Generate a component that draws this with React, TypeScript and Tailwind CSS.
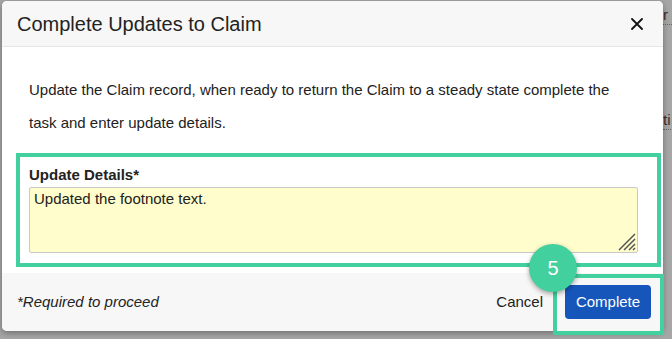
import React from 'react';

const App = () => {
  return (
    <div className="relative w-[672px] h-[339px] overflow-hidden bg-[#a6a6a6] font-['Liberation_Sans',Arial,sans-serif]">
      {/* page behind the overlay */}
      <div className="absolute left-[663px] top-[6px] text-[15px] text-[#333] border-b border-dotted border-[#666] leading-[18px] pr-[4px]">r</div>
      <div className="absolute left-[663px] top-[111px] text-[15px] text-[#333] border-b border-dotted border-[#666] leading-[18px] pr-[4px]">ti</div>

      {/* modal */}
      <div className="absolute left-[2px] top-[1px] w-[661px] h-[330px] flex flex-col rounded-[5px] bg-white overflow-hidden shadow-[0_2px_6px_rgba(0,0,0,0.35)]">
        <div className="h-[46px] shrink-0 flex items-center justify-between pl-[15px] pr-[18px] bg-[#f7f7f7] border-b border-[#e6e6e6]">
          <h1 className="text-[20px] text-[#222]">Complete Updates to Claim</h1>
          <button className="w-[16px] h-[16px] flex items-center justify-center text-[#111]">
            <svg width="12" height="12" viewBox="0 0 12 12" fill="none" stroke="currentColor" strokeWidth="1.8" strokeLinecap="round">
              <path d="M1 1l10 10M11 1L1 11" />
            </svg>
          </button>
        </div>

        <div className="flex-1 pl-[14px] pr-[2px] pt-[26px]">
          <p className="pl-[13px] pr-[30px] text-[15px] leading-[33px] text-[#222]">
            Update the Claim record, when ready to return the Claim to a steady state complete the task and enter update details.
          </p>
          <div className="mt-[14px] border-4 border-[#41d09e] pt-[8px] pl-[9px] pr-[19px] pb-[10px]">
            <label className="block text-[15px] font-bold text-[#222] leading-[20px] mb-[2px]">Update Details*</label>
            <div className="relative">
              <textarea
                defaultValue="Updated the footnote text."
                className="block w-full h-[66px] px-[4px] py-[1px] text-[15px] leading-[20px] text-[#222] bg-[#fefdcb] border border-[#c9c9c9] rounded-[2px] outline-none resize-none"
              />
              {/* resize grip */}
              <svg className="absolute right-[2px] bottom-[2px]" width="18" height="18" viewBox="0 0 18 18" stroke="#555" strokeWidth="1.5">
                <path d="M17 1L1 17M17 6L6 17M17 11L11 17M17 15L15 17" />
              </svg>
            </div>
          </div>
        </div>

        <div className="h-[58px] shrink-0 flex items-center justify-between pl-[15px] pr-[12px] bg-[#f7f7f7]">
          <span className="text-[15px] italic text-[#222]">*Required to proceed</span>
          <div className="flex items-center gap-[22px]">
            <button className="text-[15px] text-[#222]">Cancel</button>
            <button className="w-[86px] h-[34px] rounded-[4px] bg-[#1656bb] text-white text-[15px]">Complete</button>
          </div>
        </div>
      </div>

      {/* annotations */}
      <div className="absolute left-[553px] top-[274px] w-[111px] h-[61px] border-4 border-[#41d09e]" />
      <div className="absolute left-[529px] top-[244px] w-[48px] h-[48px] rounded-full bg-[#41d09e] flex items-center justify-center text-white text-[20px] shadow-[0_2px_5px_rgba(0,0,0,0.35)]">
        5
      </div>
    </div>
  );
};

export default App;
